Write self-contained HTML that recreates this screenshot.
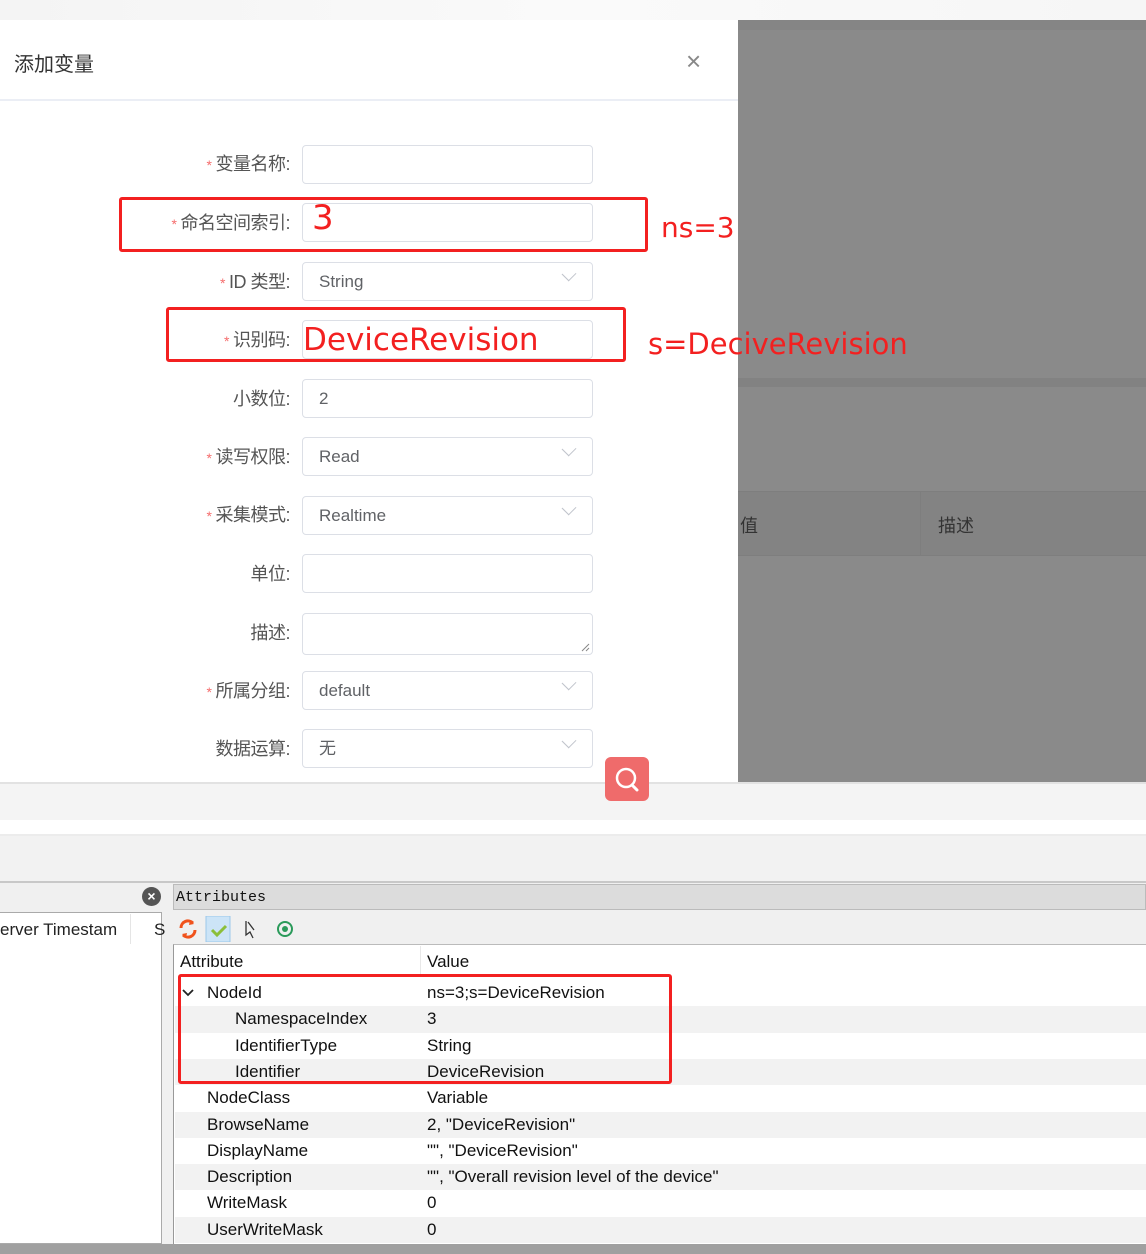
<!DOCTYPE html>
<html><head><meta charset="utf-8"><style>
*{margin:0;padding:0;box-sizing:border-box}
body{width:1146px;height:1254px;position:relative;overflow:hidden;background:#fff;font-family:"Liberation Sans","Noto Sans CJK SC",sans-serif;color:#606266}
.a{position:absolute}
.lbl{position:absolute;right:856px;font-size:18px;color:#555;white-space:nowrap;line-height:20px;letter-spacing:-0.5px}
.lbl b{color:#f56c6c;font-weight:normal;font-size:14px;margin-right:4px}
.inp{position:absolute;left:302px;width:291px;height:39px;border:1px solid #dcdfe6;border-radius:4px;background:#fff;font-size:17px;color:#606266;padding-left:16px;line-height:37px}
.chev{position:absolute;right:18px;width:10px;height:10px;border-right:1.3px solid #c0c4cc;border-bottom:1.3px solid #c0c4cc;transform:rotate(45deg) scaleY(1.1);top:6px}
.red{position:absolute;border:3px solid #f32020;border-radius:3px}
.rt{position:absolute;color:#f32020;font-family:"DejaVu Sans","Liberation Sans",sans-serif}
.row{position:absolute;left:175px;width:971px;height:26.3px;font-size:17px;color:#111;line-height:26px}
.row.g{background:#f2f2f2}
.row span{position:absolute}
.row .k{left:32px}.row .k2{left:60px}.row .v{left:252px}
</style></head><body>
<div class="a" style="left:0;top:0;width:1146px;height:20px;background:linear-gradient(90deg,#f4f4f4,#fafafa,#f6f6f6)"></div>
<div class="a" style="left:738px;top:20px;width:408px;height:762px;background:#8a8a8a"></div>
<div class="a" style="left:738px;top:20px;width:408px;height:10px;background:#858585"></div>
<div class="a" style="left:738px;top:378px;width:408px;height:9px;background:#828282"></div>
<div class="a" style="left:738px;top:491px;width:408px;height:65px;background:#838383;border-top:1px solid #7e7e7e;border-bottom:1px solid #7e7e7e"></div>
<div class="a" style="left:920px;top:491px;width:1px;height:65px;background:#7e7e7e"></div>
<div class="a" style="left:740px;top:512px;font-size:18px;color:#333">值</div>
<div class="a" style="left:938px;top:512px;font-size:18px;color:#333">描述</div>
<!-- dialog -->
<div class="a" style="left:0;top:20px;width:738px;height:762px;background:#fff"></div>
<div class="a" style="left:14px;top:48px;font-size:20px;color:#333">添加变量</div>
<div class="a" style="left:686px;top:46px;font-size:26px;color:#888;font-weight:300">×</div>
<div class="a" style="left:0;top:99px;width:738px;height:2px;background:#ebeef5"></div>

<div class="lbl" style="top:154px"><b>*</b>变量名称:</div><div class="inp" style="top:145px"></div>
<div class="lbl" style="top:213px"><b>*</b>命名空间索引:</div><div class="inp" style="top:203px"></div>
<div class="lbl" style="top:272px"><b>*</b>ID 类型:</div><div class="inp" style="top:262px">String<i class="chev"></i></div>
<div class="lbl" style="top:330px"><b>*</b>识别码:</div><div class="inp" style="top:320px"></div>
<div class="lbl" style="top:389px">小数位:</div><div class="inp" style="top:379px">2</div>
<div class="lbl" style="top:447px"><b>*</b>读写权限:</div><div class="inp" style="top:437px">Read<i class="chev"></i></div>
<div class="lbl" style="top:505px"><b>*</b>采集模式:</div><div class="inp" style="top:496px">Realtime<i class="chev"></i></div>
<div class="lbl" style="top:564px">单位:</div><div class="inp" style="top:554px"></div>
<div class="lbl" style="top:623px">描述:</div><div class="inp" style="top:613px;height:42px"><svg style="position:absolute;right:2px;bottom:2px" width="10" height="10"><path d="M9 2L2 9M9 6L6 9" stroke="#888" stroke-width="1"/></svg></div>
<div class="lbl" style="top:681px"><b>*</b>所属分组:</div><div class="inp" style="top:671px">default<i class="chev"></i></div>
<div class="lbl" style="top:739px">数据运算:</div><div class="inp" style="top:729px">无<i class="chev"></i></div>

<div class="red" style="left:119px;top:197px;width:529px;height:55px"></div>
<div class="rt" style="left:312px;top:198px;font-size:34px">3</div>
<div class="rt" style="left:661px;top:211px;font-size:28px">ns=3</div>
<div class="red" style="left:166px;top:307px;width:460px;height:55px"></div>
<div class="rt" style="left:303px;top:320px;font-size:31px;line-height:40px">DeviceRevision</div>
<div class="rt" style="left:648px;top:327px;font-size:29px">s=DeciveRevision</div>

<div class="a" style="left:0;top:782px;width:1146px;height:38px;background:#f4f4f4;border-top:2px solid #e2e2e2"></div>
<div class="a" style="left:605px;top:757px;width:44px;height:44px;border-radius:6px;background:#ef6b6b"></div>
<svg class="a" style="left:605px;top:757px" width="44" height="44"><circle cx="21" cy="21" r="9" fill="none" stroke="#fff" stroke-width="2.5"/><path d="M27 28l5 5" stroke="#fff" stroke-width="3" stroke-linecap="round"/></svg>
<div class="a" style="left:0;top:834px;width:1146px;height:48px;background:#f2f2f2;border-top:2px solid #ececec"></div>
<div class="a" style="left:0;top:881px;width:1146px;height:2px;background:#c8c8c8"></div>
<div class="a" style="left:0;top:883px;width:1146px;height:361px;background:#f0f0f0"></div>
<div class="a" style="left:142px;top:887px;width:19px;height:19px;border-radius:50%;background:#555;color:#fff;font-size:14px;text-align:center;line-height:19px;font-weight:bold">×</div>
<div class="a" style="left:0;top:912px;width:162px;height:332px;background:#fff;border:1px solid #aaa;border-left:none"></div>
<div class="a" style="left:0;top:920px;font-size:17px;color:#222">erver Timestam</div>
<div class="a" style="left:130px;top:914px;width:1px;height:30px;background:#e5e5e5"></div>
<div class="a" style="left:154px;top:920px;font-size:17px;color:#222">S</div>
<div class="a" style="left:173px;top:884px;width:973px;height:26px;background:#dcdcdc;border:1px solid #bbb"></div>
<div class="a" style="left:176px;top:889px;font-family:'Liberation Mono',monospace;font-size:15px;color:#111">Attributes</div>
<svg class="a" style="left:176px;top:916px" width="130" height="26">
<path d="M5 12a7 7 0 0 1 12-5M19 14a7 7 0 0 1-12 5" fill="none" stroke="#f0531c" stroke-width="3"/>
<path d="M14 4l4 4-5 1zM10 22l-4-4 5-1z" fill="#f0531c"/>
<rect x="30" y="0" width="24" height="26" fill="#cce4f7" stroke="#9cc7ea"/>
<path d="M36 14l5 5 9-9" fill="none" stroke="#8cbf3a" stroke-width="3"/>
<path d="M70 5l0 14 4-3 3 6M72 6l6 8" fill="none" stroke="#333" stroke-width="1.3"/>
<circle cx="109" cy="13" r="7" fill="none" stroke="#2a9a5a" stroke-width="2"/><circle cx="109" cy="13" r="3" fill="#2a9a5a"/>
</svg>
<div class="a" style="left:173px;top:944px;width:973px;height:300px;background:#fff;border-left:1px solid #999;border-top:1px solid #bbb"></div>
<div class="a" style="left:420px;top:946px;width:1px;height:30px;background:#e8e8e8"></div>
<div class="a" style="left:180px;top:952px;font-size:17px;color:#111">Attribute</div>
<div class="a" style="left:427px;top:952px;font-size:17px;color:#111">Value</div>
<div class="row" style="top:980px"><svg style="position:absolute;left:7px;top:8px" width="12" height="10"><path d="M1 2l5 5 5-5" fill="none" stroke="#222" stroke-width="1.8"/></svg><span class="k">NodeId</span><span class="v">ns=3;s=DeviceRevision</span></div>
<div class="row g" style="top:1006.3px"><span class="k2">NamespaceIndex</span><span class="v">3</span></div>
<div class="row" style="top:1032.6px"><span class="k2">IdentifierType</span><span class="v">String</span></div>
<div class="row g" style="top:1058.9px"><span class="k2">Identifier</span><span class="v">DeviceRevision</span></div>
<div class="row" style="top:1085.2px"><span class="k">NodeClass</span><span class="v">Variable</span></div>
<div class="row g" style="top:1111.5px"><span class="k">BrowseName</span><span class="v">2, "DeviceRevision"</span></div>
<div class="row" style="top:1137.8px"><span class="k">DisplayName</span><span class="v">"", "DeviceRevision"</span></div>
<div class="row g" style="top:1164.1px"><span class="k">Description</span><span class="v">"", "Overall revision level of the device"</span></div>
<div class="row" style="top:1190.4px"><span class="k">WriteMask</span><span class="v">0</span></div>
<div class="row g" style="top:1216.7px"><span class="k">UserWriteMask</span><span class="v">0</span></div>
<div class="red" style="left:178px;top:974px;width:494px;height:110px"></div>
<div class="a" style="left:0;top:1244px;width:1146px;height:10px;background:#a0a0a0"></div>
</body></html>
